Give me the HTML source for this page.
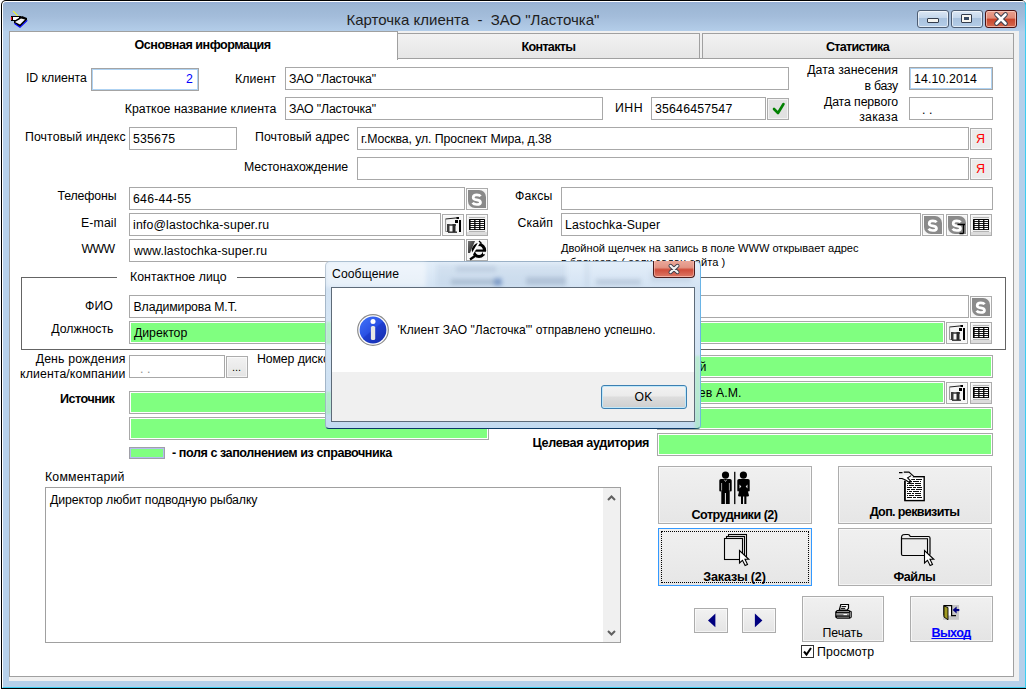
<!DOCTYPE html><html><head><meta charset="utf-8"><style>html,body{margin:0;padding:0;width:1026px;height:690px;overflow:hidden;background:#fff;}div,span,svg{position:absolute;}.t{white-space:pre;font-family:"Liberation Sans",sans-serif;}</style></head><body><div style="left:1px;top:0px;width:1025px;height:689px;background:#000;border-radius:5px 5px 0 0;"></div><div style="left:2px;top:1px;width:1024px;height:687px;background:linear-gradient(#95aed6 0px,#9cb6d4 3px,#a3bcda 14px,#b2cce8 28px,#b6d0ea 30px,#b6d0ea 100%);border-left:1px solid #fff;border-top:1px solid #fff;border-right:1px solid #3ccdf0;border-bottom:1px solid #3ccdf0;box-sizing:border-box;border-radius:4px 4px 0 0;"></div><div style="left:3px;top:31px;width:1016px;height:650px;background:#b6d0ea;"></div><div style="left:9px;top:31px;width:1010px;height:650px;background:#f0f0f0;"></div><div style="left:9px;top:58px;width:1005px;height:619px;background:#fff;border:1px solid #a0a0a0;box-sizing:border-box;"></div><div style="left:397px;top:33px;width:303px;height:26px;background:linear-gradient(#f2f2f2,#e6e6e6);border:1px solid #a0a0a0;box-sizing:border-box;"></div><div style="left:702px;top:33px;width:312px;height:26px;background:linear-gradient(#f2f2f2,#e6e6e6);border:1px solid #a0a0a0;box-sizing:border-box;"></div><div style="left:9px;top:31px;width:389px;height:29px;background:#fff;border:1px solid #a0a0a0;border-bottom:none;box-sizing:border-box;"></div><span class="t" style="left:134.5px;top:38.13px;font-size:12.6px;line-height:15px;font-weight:bold;color:#000;letter-spacing:-0.5px;">Основная информация</span><span class="t" style="left:521.5px;top:40.13px;font-size:12.6px;line-height:15px;font-weight:bold;color:#000;letter-spacing:-0.7px;">Контакты</span><span class="t" style="left:826px;top:40.13px;font-size:12.6px;line-height:15px;font-weight:bold;color:#000;letter-spacing:-0.75px;">Статистика</span><span class="t" style="left:346.5px;top:11.30px;font-size:15px;line-height:18px;font-weight:normal;color:#1e1e1e;letter-spacing:0px;">Карточка клиента&nbsp; -&nbsp; ЗАО "Ласточка"</span><div style="left:917px;top:10px;width:32px;height:18px;border:1px solid #4d5d73;border-radius:3px;box-sizing:border-box;background:linear-gradient(#dbe7f4 0%,#c3d6eb 45%,#a9c2de 46%,#b4cde8 100%);box-shadow:inset 0 0 0 1px rgba(255,255,255,.6);"></div><div style="left:951px;top:10px;width:32px;height:18px;border:1px solid #4d5d73;border-radius:3px;box-sizing:border-box;background:linear-gradient(#dbe7f4 0%,#c3d6eb 45%,#a9c2de 46%,#b4cde8 100%);box-shadow:inset 0 0 0 1px rgba(255,255,255,.6);"></div><div style="left:985px;top:10px;width:32px;height:18px;border:1px solid #4a1010;border-radius:3px;box-sizing:border-box;background:linear-gradient(#eaa08e 0%,#e08a76 45%,#c8442a 50%,#d46a50 100%);box-shadow:inset 0 0 0 1px rgba(255,220,210,.6);"></div><div style="left:927px;top:18px;width:12px;height:5px;background:#f4f4f0;border:1px solid #333c4c;border-radius:1px;box-sizing:border-box;"></div><div style="left:961px;top:14px;width:11px;height:9px;background:#f8f6f0;border:1px solid #333c4c;border-radius:1px;box-sizing:border-box;"></div><div style="left:964px;top:17px;width:5px;height:3px;background:#394a62;"></div><svg style="position:absolute;left:992px;top:11px" width="18" height="16"><path d="M4.5 3.5 L13.5 12.5 M13.5 3.5 L4.5 12.5" stroke="#3a4050" stroke-width="4.6" stroke-linecap="round"/><path d="M4.5 3.5 L13.5 12.5 M13.5 3.5 L4.5 12.5" stroke="#fff" stroke-width="2.6" stroke-linecap="round"/></svg><svg style="left:8px;top:8px" width="24" height="22" shape-rendering="crispEdges"><path d="M5 3 L12 10" stroke="#ffff00" stroke-width="1.05" shape-rendering="auto"/><rect x="3" y="8" width="10" height="5" fill="#000"/><rect x="3" y="9" width="1" height="3" fill="#ff0000"/><rect x="5" y="9" width="6" height="3" fill="#fff"/><path d="M6 13 L14 8 L19 10 L19 12 L12 19 L6 15 Z" fill="#000" shape-rendering="auto"/><path d="M7 14 L13 10.5 L17 11.5 L12 16.5 Z" fill="#f4f4f4" shape-rendering="auto"/><path d="M6.5 15.5 L12 19.3 L19.3 12.3" fill="none" stroke="#0000ff" stroke-width="1.1" shape-rendering="auto"/><path d="M12 10 L10 12" stroke="#000" stroke-width="1" shape-rendering="auto"/></svg><span class="t" style="left:26px;top:71.24px;font-size:12.3px;line-height:15px;font-weight:normal;color:#000;letter-spacing:-0.05px;">ID клиента</span><div style="left:91px;top:68px;width:108px;height:23px;background:#fff;border:1px solid #a4a4a4;box-sizing:border-box;box-shadow:inset 0 0 0 1px #aed2f2;"></div><span class="t" style="right:833px;top:72.24px;font-size:12.3px;line-height:15px;font-weight:normal;color:#0000ff;letter-spacing:0.08px;">2</span><span class="t" style="left:235px;top:72.24px;font-size:12.3px;line-height:15px;font-weight:normal;color:#000;letter-spacing:0.1px;">Клиент</span><div style="left:285px;top:67px;width:504px;height:23px;background:#fff;border:1px solid #a8a8a8;box-sizing:border-box;"></div><span class="t" style="left:289px;top:72.24px;font-size:12.3px;line-height:15px;font-weight:normal;color:#000;letter-spacing:-0.15px;">ЗАО "Ласточка"</span><span class="t" style="right:128px;top:63.44px;font-size:12.3px;line-height:15px;font-weight:normal;color:#000;letter-spacing:0.05px;">Дата занесения</span><span class="t" style="right:128px;top:78.54px;font-size:12.3px;line-height:15px;font-weight:normal;color:#000;letter-spacing:-0.25px;">в базу</span><div style="left:909px;top:67px;width:84px;height:23px;background:#fff;border:1px solid #a4a4a4;box-sizing:border-box;box-shadow:inset 0 0 0 1px #aed2f2;"></div><span class="t" style="left:914px;top:72.24px;font-size:12.3px;line-height:15px;font-weight:normal;color:#000;letter-spacing:0.15px;">14.10.2014</span><span class="t" style="right:749.5px;top:102.24px;font-size:12.3px;line-height:15px;font-weight:normal;color:#000;letter-spacing:0.05px;">Краткое название клиента</span><div style="left:285px;top:97px;width:318px;height:23px;background:#fff;border:1px solid #a8a8a8;box-sizing:border-box;"></div><span class="t" style="left:289px;top:102.24px;font-size:12.3px;line-height:15px;font-weight:normal;color:#000;letter-spacing:-0.15px;">ЗАО "Ласточка"</span><span class="t" style="left:615px;top:101.24px;font-size:12.3px;line-height:15px;font-weight:normal;color:#000;letter-spacing:0.5px;">ИНН</span><div style="left:651px;top:97px;width:115px;height:23px;background:#fff;border:1px solid #a8a8a8;box-sizing:border-box;"></div><span class="t" style="left:655px;top:102.24px;font-size:12.3px;line-height:15px;font-weight:normal;color:#000;letter-spacing:0.2px;">35646457547</span><div style="left:767px;top:98px;width:22px;height:22px;background:linear-gradient(#f0f0f0,#e5e5e5);border:1px solid #acacac;box-sizing:border-box;box-shadow:inset 0 0 0 1px rgba(255,255,255,.6);background:#e1e1e1;"><svg width="22" height="22" style="left:-1px;top:-1px"><path d="M7 11 L11 15 L16.5 6" fill="none" stroke="#008000" stroke-width="2.6" stroke-linecap="round" stroke-linejoin="round"/></svg></div><span class="t" style="right:128px;top:94.64px;font-size:12.3px;line-height:15px;font-weight:normal;color:#000;letter-spacing:-0.1px;">Дата первого</span><span class="t" style="right:128px;top:109.74px;font-size:12.3px;line-height:15px;font-weight:normal;color:#000;letter-spacing:0.25px;">заказа</span><div style="left:909px;top:97px;width:84px;height:23px;background:#fff;border:1px solid #a8a8a8;box-sizing:border-box;"></div><span class="t" style="left:922px;top:103.24px;font-size:12.3px;line-height:15px;font-weight:normal;color:#000;letter-spacing:0.08px;">. .</span><span class="t" style="left:25px;top:129.74px;font-size:12.3px;line-height:15px;font-weight:normal;color:#000;letter-spacing:0.1px;">Почтовый индекс</span><div style="left:129px;top:127px;width:108px;height:23px;background:#fff;border:1px solid #a8a8a8;box-sizing:border-box;"></div><span class="t" style="left:133px;top:132.24px;font-size:12.3px;line-height:15px;font-weight:normal;color:#000;letter-spacing:0.2px;">535675</span><span class="t" style="left:255px;top:129.74px;font-size:12.3px;line-height:15px;font-weight:normal;color:#000;letter-spacing:0.05px;">Почтовый адрес</span><div style="left:357px;top:127px;width:612px;height:23px;background:#fff;border:1px solid #a8a8a8;box-sizing:border-box;"></div><span class="t" style="left:361px;top:132.24px;font-size:12.3px;line-height:15px;font-weight:normal;color:#000;letter-spacing:-0.1px;">г.Москва, ул. Проспект Мира, д.38</span><div style="left:970px;top:128px;width:22px;height:22px;background:linear-gradient(#f0f0f0,#e5e5e5);border:1px solid #acacac;box-sizing:border-box;box-shadow:inset 0 0 0 1px rgba(255,255,255,.6);background:#ececec;"><span class="t" style="left:5px;top:2px;font-size:12.5px;line-height:16px;color:#f00">Я</span></div><span class="t" style="right:678px;top:160.24px;font-size:12.3px;line-height:15px;font-weight:normal;color:#000;letter-spacing:-0.05px;">Местонахождение</span><div style="left:357px;top:157px;width:612px;height:23px;background:#fff;border:1px solid #a8a8a8;box-sizing:border-box;"></div><div style="left:970px;top:158px;width:22px;height:22px;background:linear-gradient(#f0f0f0,#e5e5e5);border:1px solid #acacac;box-sizing:border-box;box-shadow:inset 0 0 0 1px rgba(255,255,255,.6);background:#ececec;"><span class="t" style="left:5px;top:2px;font-size:12.5px;line-height:16px;color:#f00">Я</span></div><span class="t" style="right:909.5px;top:189.24px;font-size:12.3px;line-height:15px;font-weight:normal;color:#000;letter-spacing:-0.1px;">Телефоны</span><div style="left:129px;top:187px;width:336px;height:23px;background:#fff;border:1px solid #a8a8a8;box-sizing:border-box;"></div><span class="t" style="left:133px;top:192.24px;font-size:12.3px;line-height:15px;font-weight:normal;color:#000;letter-spacing:0.25px;">646-44-55</span><span class="t" style="left:515px;top:189.24px;font-size:12.3px;line-height:15px;font-weight:normal;color:#000;letter-spacing:0.15px;">Факсы</span><div style="left:561px;top:187px;width:432px;height:23px;background:#fff;border:1px solid #a8a8a8;box-sizing:border-box;"></div><div style="left:466px;top:188px;width:22px;height:22px;background:linear-gradient(#f0f0f0,#e5e5e5);border:1px solid #acacac;box-sizing:border-box;box-shadow:inset 0 0 0 1px rgba(255,255,255,.6);background:#f4f4f4;"><svg width="22" height="22" style="left:-1px;top:-1px"><path d="M2 2 H13 A7 7 0 0 1 20 9 V20 H9 A7 7 0 0 1 2 13 Z" fill="#8a8a8a"/><path d="M14.6 8.3 Q13.6 6.9 10.8 6.9 Q7.2 6.9 7.2 9.4 Q7.2 11.4 10.8 11.8 Q14.5 12.2 14.5 14.4 Q14.5 16.5 10.8 16.5 Q7.7 16.5 6.6 14.8" fill="none" stroke="#fff" stroke-width="2.7"/></svg></div><span class="t" style="right:909.5px;top:216.24px;font-size:12.3px;line-height:15px;font-weight:normal;color:#000;letter-spacing:0.1px;">E-mail</span><div style="left:129px;top:213px;width:312px;height:23px;background:#fff;border:1px solid #a8a8a8;box-sizing:border-box;"></div><span class="t" style="left:133px;top:218.24px;font-size:12.3px;line-height:15px;font-weight:normal;color:#000;letter-spacing:0.15px;">info@lastochka-super.ru</span><div style="left:442px;top:214px;width:22px;height:22px;background:linear-gradient(#f0f0f0,#e5e5e5);border:1px solid #acacac;box-sizing:border-box;box-shadow:inset 0 0 0 1px rgba(255,255,255,.6);background:#f6f6f6;"><svg width="22" height="22" style="left:-1px;top:-1px"><path d="M3.5 5 L16 3.8" stroke="#222" stroke-width="1.1"/><rect x="14.5" y="3" width="2.5" height="2" fill="#000"/><path d="M3.6 5 V17.5 H15" stroke="#777" stroke-width="0.8" fill="none"/><rect x="13" y="6" width="3" height="3" fill="#000"/><rect x="17" y="6" width="2" height="12" fill="#000"/><rect x="5" y="10" width="9" height="2" fill="#666"/><rect x="5" y="10" width="2.5" height="8" fill="#3a3a3a"/><rect x="10.5" y="10" width="3" height="8" fill="#2a2a2a"/><path d="M6 18.5 H15" stroke="#444" stroke-width="1"/></svg></div><div style="left:466px;top:214px;width:22px;height:22px;background:linear-gradient(#f0f0f0,#e5e5e5);border:1px solid #acacac;box-sizing:border-box;box-shadow:inset 0 0 0 1px rgba(255,255,255,.6);background:#f0f0f0;"><svg width="22" height="22" style="left:-1px;top:-1px"><rect x="3" y="3" width="16" height="1" fill="#b4b4b4"/><rect x="3" y="17" width="16" height="1" fill="#b4b4b4"/><rect x="1" y="18" width="20" height="3" fill="#dcdcdc"/><rect x="3" y="5" width="16" height="11" rx="0.5" fill="#000"/><rect x="4.6" y="6" width="3.6" height="1.1" fill="#fff"/><rect x="9.5" y="6" width="3.6" height="1.1" fill="#fff"/><rect x="14.4" y="6" width="3.6" height="1.1" fill="#fff"/><rect x="4.6" y="8" width="3.6" height="1.1" fill="#fff"/><rect x="9.5" y="8" width="3.6" height="1.1" fill="#fff"/><rect x="14.4" y="8" width="3.6" height="1.1" fill="#fff"/><rect x="4.6" y="10" width="3.6" height="1.1" fill="#fff"/><rect x="9.5" y="10" width="3.6" height="1.1" fill="#fff"/><rect x="14.4" y="10" width="3.6" height="1.1" fill="#fff"/><rect x="4.6" y="12" width="3.6" height="1.1" fill="#fff"/><rect x="9.5" y="12" width="3.6" height="1.1" fill="#fff"/><rect x="14.4" y="12" width="3.6" height="1.1" fill="#fff"/><rect x="4.6" y="14" width="3.6" height="1.1" fill="#fff"/><rect x="9.5" y="14" width="3.6" height="1.1" fill="#fff"/><rect x="14.4" y="14" width="3.6" height="1.1" fill="#fff"/></svg></div><span class="t" style="left:517.5px;top:216.24px;font-size:12.3px;line-height:15px;font-weight:normal;color:#000;letter-spacing:0.1px;">Скайп</span><div style="left:561px;top:213px;width:360px;height:23px;background:#fff;border:1px solid #a8a8a8;box-sizing:border-box;"></div><span class="t" style="left:565px;top:218.24px;font-size:12.3px;line-height:15px;font-weight:normal;color:#000;letter-spacing:0.15px;">Lastochka-Super</span><div style="left:922px;top:214px;width:22px;height:22px;background:linear-gradient(#f0f0f0,#e5e5e5);border:1px solid #acacac;box-sizing:border-box;box-shadow:inset 0 0 0 1px rgba(255,255,255,.6);background:#f4f4f4;"><svg width="22" height="22" style="left:-1px;top:-1px"><path d="M2 2 H13 A7 7 0 0 1 20 9 V20 H9 A7 7 0 0 1 2 13 Z" fill="#8a8a8a"/><path d="M14.6 8.3 Q13.6 6.9 10.8 6.9 Q7.2 6.9 7.2 9.4 Q7.2 11.4 10.8 11.8 Q14.5 12.2 14.5 14.4 Q14.5 16.5 10.8 16.5 Q7.7 16.5 6.6 14.8" fill="none" stroke="#fff" stroke-width="2.7"/></svg></div><div style="left:946px;top:214px;width:22px;height:22px;background:linear-gradient(#f0f0f0,#e5e5e5);border:1px solid #acacac;box-sizing:border-box;box-shadow:inset 0 0 0 1px rgba(255,255,255,.6);background:#f4f4f4;"><svg width="22" height="22" style="left:-1px;top:-1px"><path d="M2 2 H13 A7 7 0 0 1 20 9 V20 H9 A7 7 0 0 1 2 13 Z" fill="#8a8a8a"/><path d="M14.6 8.3 Q13.6 6.9 10.8 6.9 Q7.2 6.9 7.2 9.4 Q7.2 11.4 10.8 11.8 Q14.5 12.2 14.5 14.4 Q14.5 16.5 10.8 16.5 Q7.7 16.5 6.6 14.8" fill="none" stroke="#fff" stroke-width="2.7"/><path d="M11.5 10.5 H19 M17.5 10.5 V19.5 M13.5 19.5 H17.5" stroke="#000" stroke-width="1.3" fill="none"/></svg></div><div style="left:970px;top:214px;width:22px;height:22px;background:linear-gradient(#f0f0f0,#e5e5e5);border:1px solid #acacac;box-sizing:border-box;box-shadow:inset 0 0 0 1px rgba(255,255,255,.6);background:#f0f0f0;"><svg width="22" height="22" style="left:-1px;top:-1px"><rect x="3" y="3" width="16" height="1" fill="#b4b4b4"/><rect x="3" y="17" width="16" height="1" fill="#b4b4b4"/><rect x="1" y="18" width="20" height="3" fill="#dcdcdc"/><rect x="3" y="5" width="16" height="11" rx="0.5" fill="#000"/><rect x="4.6" y="6" width="3.6" height="1.1" fill="#fff"/><rect x="9.5" y="6" width="3.6" height="1.1" fill="#fff"/><rect x="14.4" y="6" width="3.6" height="1.1" fill="#fff"/><rect x="4.6" y="8" width="3.6" height="1.1" fill="#fff"/><rect x="9.5" y="8" width="3.6" height="1.1" fill="#fff"/><rect x="14.4" y="8" width="3.6" height="1.1" fill="#fff"/><rect x="4.6" y="10" width="3.6" height="1.1" fill="#fff"/><rect x="9.5" y="10" width="3.6" height="1.1" fill="#fff"/><rect x="14.4" y="10" width="3.6" height="1.1" fill="#fff"/><rect x="4.6" y="12" width="3.6" height="1.1" fill="#fff"/><rect x="9.5" y="12" width="3.6" height="1.1" fill="#fff"/><rect x="14.4" y="12" width="3.6" height="1.1" fill="#fff"/><rect x="4.6" y="14" width="3.6" height="1.1" fill="#fff"/><rect x="9.5" y="14" width="3.6" height="1.1" fill="#fff"/><rect x="14.4" y="14" width="3.6" height="1.1" fill="#fff"/></svg></div><span class="t" style="right:911.5px;top:242.04px;font-size:12.3px;line-height:15px;font-weight:normal;color:#000;letter-spacing:-0.6px;">WWW</span><div style="left:129px;top:239px;width:336px;height:23px;background:#fff;border:1px solid #a8a8a8;box-sizing:border-box;"></div><span class="t" style="left:134px;top:244.24px;font-size:12.3px;line-height:15px;font-weight:normal;color:#000;letter-spacing:0.15px;">www.lastochka-super.ru</span><div style="left:466px;top:239px;width:22px;height:22px;background:linear-gradient(#f0f0f0,#e5e5e5);border:1px solid #acacac;box-sizing:border-box;box-shadow:inset 0 0 0 1px rgba(255,255,255,.6);background:#f4f4f4;"><svg width="22" height="22" style="left:-1px;top:-1px"><defs><linearGradient id="ieg" x1="0" y1="0" x2="1" y2="1"><stop offset="0" stop-color="#777"/><stop offset="1" stop-color="#111"/></linearGradient></defs><path d="M2 2 H9 L4 14 H2 Z" fill="url(#ieg)"/><ellipse cx="13" cy="11.5" rx="5.6" ry="6" fill="none" stroke="#000" stroke-width="3.2"/><rect x="8" y="10.5" width="10" height="2.2" fill="#000"/><path d="M17 14 H20" stroke="#f4f4f4" stroke-width="2.5"/><path d="M3.5 19.5 L13.5 3" stroke="#fff" stroke-width="1.8"/><path d="M4 20.5 L9 17" stroke="#000" stroke-width="2.2"/><path d="M13 2 L15.5 4.5" stroke="#000" stroke-width="1.2"/></svg></div><span class="t" style="left:561px;top:242.15px;font-size:11.1px;line-height:13px;font-weight:normal;color:#000;letter-spacing:-0.03px;">Двойной щелчек на запись в поле WWW открывает адрес</span><span class="t" style="left:561px;top:256.45px;font-size:11.1px;line-height:13px;font-weight:normal;color:#000;letter-spacing:0.05px;">в браузере ( если задан сайта )</span><div style="left:21px;top:277px;width:985px;height:73px;border:1px solid #646464;box-sizing:border-box;"></div><div style="left:117px;top:270px;width:120px;height:15px;background:#fff;"></div><span class="t" style="left:130px;top:270.24px;font-size:12.3px;line-height:15px;font-weight:normal;color:#000;letter-spacing:0.05px;">Контактное лицо</span><span class="t" style="right:913px;top:299.24px;font-size:12.3px;line-height:15px;font-weight:normal;color:#000;letter-spacing:0.08px;">ФИО</span><div style="left:129px;top:295px;width:840px;height:23px;background:#fff;border:1px solid #a8a8a8;box-sizing:border-box;"></div><span class="t" style="left:133.5px;top:300.24px;font-size:12.3px;line-height:15px;font-weight:normal;color:#000;letter-spacing:-0.1px;">Владимирова М.Т.</span><div style="left:970px;top:296px;width:22px;height:22px;background:linear-gradient(#f0f0f0,#e5e5e5);border:1px solid #acacac;box-sizing:border-box;box-shadow:inset 0 0 0 1px rgba(255,255,255,.6);background:#f4f4f4;"><svg width="22" height="22" style="left:-1px;top:-1px"><path d="M2 2 H13 A7 7 0 0 1 20 9 V20 H9 A7 7 0 0 1 2 13 Z" fill="#8a8a8a"/><path d="M14.6 8.3 Q13.6 6.9 10.8 6.9 Q7.2 6.9 7.2 9.4 Q7.2 11.4 10.8 11.8 Q14.5 12.2 14.5 14.4 Q14.5 16.5 10.8 16.5 Q7.7 16.5 6.6 14.8" fill="none" stroke="#fff" stroke-width="2.7"/></svg></div><span class="t" style="right:912.5px;top:322.24px;font-size:12.3px;line-height:15px;font-weight:normal;color:#000;letter-spacing:0.0px;">Должность</span><div style="left:129px;top:321px;width:816px;height:23px;background:#80ff80;border:1px solid #a8a8a8;box-sizing:border-box;box-shadow:inset 0 0 0 1px #fff;"></div><span class="t" style="left:134px;top:326.24px;font-size:12.3px;line-height:15px;font-weight:normal;color:#000;letter-spacing:-0.05px;">Директор</span><div style="left:946px;top:322px;width:22px;height:22px;background:linear-gradient(#f0f0f0,#e5e5e5);border:1px solid #acacac;box-sizing:border-box;box-shadow:inset 0 0 0 1px rgba(255,255,255,.6);background:#f6f6f6;"><svg width="22" height="22" style="left:-1px;top:-1px"><path d="M3.5 5 L16 3.8" stroke="#222" stroke-width="1.1"/><rect x="14.5" y="3" width="2.5" height="2" fill="#000"/><path d="M3.6 5 V17.5 H15" stroke="#777" stroke-width="0.8" fill="none"/><rect x="13" y="6" width="3" height="3" fill="#000"/><rect x="17" y="6" width="2" height="12" fill="#000"/><rect x="5" y="10" width="9" height="2" fill="#666"/><rect x="5" y="10" width="2.5" height="8" fill="#3a3a3a"/><rect x="10.5" y="10" width="3" height="8" fill="#2a2a2a"/><path d="M6 18.5 H15" stroke="#444" stroke-width="1"/></svg></div><div style="left:970px;top:322px;width:22px;height:22px;background:linear-gradient(#f0f0f0,#e5e5e5);border:1px solid #acacac;box-sizing:border-box;box-shadow:inset 0 0 0 1px rgba(255,255,255,.6);background:#f0f0f0;"><svg width="22" height="22" style="left:-1px;top:-1px"><rect x="3" y="3" width="16" height="1" fill="#b4b4b4"/><rect x="3" y="17" width="16" height="1" fill="#b4b4b4"/><rect x="1" y="18" width="20" height="3" fill="#dcdcdc"/><rect x="3" y="5" width="16" height="11" rx="0.5" fill="#000"/><rect x="4.6" y="6" width="3.6" height="1.1" fill="#fff"/><rect x="9.5" y="6" width="3.6" height="1.1" fill="#fff"/><rect x="14.4" y="6" width="3.6" height="1.1" fill="#fff"/><rect x="4.6" y="8" width="3.6" height="1.1" fill="#fff"/><rect x="9.5" y="8" width="3.6" height="1.1" fill="#fff"/><rect x="14.4" y="8" width="3.6" height="1.1" fill="#fff"/><rect x="4.6" y="10" width="3.6" height="1.1" fill="#fff"/><rect x="9.5" y="10" width="3.6" height="1.1" fill="#fff"/><rect x="14.4" y="10" width="3.6" height="1.1" fill="#fff"/><rect x="4.6" y="12" width="3.6" height="1.1" fill="#fff"/><rect x="9.5" y="12" width="3.6" height="1.1" fill="#fff"/><rect x="14.4" y="12" width="3.6" height="1.1" fill="#fff"/><rect x="4.6" y="14" width="3.6" height="1.1" fill="#fff"/><rect x="9.5" y="14" width="3.6" height="1.1" fill="#fff"/><rect x="14.4" y="14" width="3.6" height="1.1" fill="#fff"/></svg></div><span class="t" style="right:900.5px;top:351.54px;font-size:12.3px;line-height:15px;font-weight:normal;color:#000;letter-spacing:0.15px;">День рождения</span><span class="t" style="right:900.5px;top:366.74px;font-size:12.3px;line-height:15px;font-weight:normal;color:#000;letter-spacing:0.1px;">клиента/компании</span><div style="left:129px;top:355px;width:96px;height:23px;background:#fff;border:1px solid #a8a8a8;box-sizing:border-box;"></div><span class="t" style="left:140px;top:362.24px;font-size:12.3px;line-height:15px;font-weight:normal;color:#909090;letter-spacing:0.08px;">. .</span><div style="left:226px;top:356px;width:22px;height:22px;background:linear-gradient(#f0f0f0,#e5e5e5);border:1px solid #acacac;box-sizing:border-box;box-shadow:inset 0 0 0 1px rgba(255,255,255,.6);background:linear-gradient(#f2f2f2,#e4e4e4);"><span class="t" style="left:5px;top:3px;font-size:11px;line-height:14px">...</span></div><span class="t" style="left:257px;top:352.04px;font-size:12.3px;line-height:15px;font-weight:normal;color:#000;letter-spacing:-0.1px;">Номер дисконтной карты</span><div style="left:657px;top:355px;width:336px;height:23px;background:#80ff80;border:1px solid #a8a8a8;box-sizing:border-box;box-shadow:inset 0 0 0 1px #fff;"></div><span class="t" style="right:319.5px;top:360.24px;font-size:12.3px;line-height:15px;font-weight:normal;color:#000;letter-spacing:0.08px;">Основной</span><span class="t" style="left:60px;top:391.63px;font-size:12.6px;line-height:15px;font-weight:bold;color:#000;letter-spacing:-0.5px;">Источник</span><div style="left:129px;top:391px;width:360px;height:23px;background:#80ff80;border:1px solid #a8a8a8;box-sizing:border-box;box-shadow:inset 0 0 0 1px #fff;"></div><div style="left:657px;top:381px;width:288px;height:23px;background:#80ff80;border:1px solid #a8a8a8;box-sizing:border-box;box-shadow:inset 0 0 0 1px #fff;"></div><span class="t" style="right:284.5px;top:385.74px;font-size:12.3px;line-height:15px;font-weight:normal;color:#000;letter-spacing:0.08px;">Соловьев А.М.</span><div style="left:946px;top:382px;width:22px;height:22px;background:linear-gradient(#f0f0f0,#e5e5e5);border:1px solid #acacac;box-sizing:border-box;box-shadow:inset 0 0 0 1px rgba(255,255,255,.6);background:#f6f6f6;"><svg width="22" height="22" style="left:-1px;top:-1px"><path d="M3.5 5 L16 3.8" stroke="#222" stroke-width="1.1"/><rect x="14.5" y="3" width="2.5" height="2" fill="#000"/><path d="M3.6 5 V17.5 H15" stroke="#777" stroke-width="0.8" fill="none"/><rect x="13" y="6" width="3" height="3" fill="#000"/><rect x="17" y="6" width="2" height="12" fill="#000"/><rect x="5" y="10" width="9" height="2" fill="#666"/><rect x="5" y="10" width="2.5" height="8" fill="#3a3a3a"/><rect x="10.5" y="10" width="3" height="8" fill="#2a2a2a"/><path d="M6 18.5 H15" stroke="#444" stroke-width="1"/></svg></div><div style="left:970px;top:382px;width:22px;height:22px;background:linear-gradient(#f0f0f0,#e5e5e5);border:1px solid #acacac;box-sizing:border-box;box-shadow:inset 0 0 0 1px rgba(255,255,255,.6);background:#f0f0f0;"><svg width="22" height="22" style="left:-1px;top:-1px"><rect x="3" y="3" width="16" height="1" fill="#b4b4b4"/><rect x="3" y="17" width="16" height="1" fill="#b4b4b4"/><rect x="1" y="18" width="20" height="3" fill="#dcdcdc"/><rect x="3" y="5" width="16" height="11" rx="0.5" fill="#000"/><rect x="4.6" y="6" width="3.6" height="1.1" fill="#fff"/><rect x="9.5" y="6" width="3.6" height="1.1" fill="#fff"/><rect x="14.4" y="6" width="3.6" height="1.1" fill="#fff"/><rect x="4.6" y="8" width="3.6" height="1.1" fill="#fff"/><rect x="9.5" y="8" width="3.6" height="1.1" fill="#fff"/><rect x="14.4" y="8" width="3.6" height="1.1" fill="#fff"/><rect x="4.6" y="10" width="3.6" height="1.1" fill="#fff"/><rect x="9.5" y="10" width="3.6" height="1.1" fill="#fff"/><rect x="14.4" y="10" width="3.6" height="1.1" fill="#fff"/><rect x="4.6" y="12" width="3.6" height="1.1" fill="#fff"/><rect x="9.5" y="12" width="3.6" height="1.1" fill="#fff"/><rect x="14.4" y="12" width="3.6" height="1.1" fill="#fff"/><rect x="4.6" y="14" width="3.6" height="1.1" fill="#fff"/><rect x="9.5" y="14" width="3.6" height="1.1" fill="#fff"/><rect x="14.4" y="14" width="3.6" height="1.1" fill="#fff"/></svg></div><div style="left:129px;top:417px;width:360px;height:23px;background:#80ff80;border:1px solid #a8a8a8;box-sizing:border-box;box-shadow:inset 0 0 0 1px #fff;"></div><div style="left:657px;top:407px;width:336px;height:23px;background:#80ff80;border:1px solid #a8a8a8;box-sizing:border-box;box-shadow:inset 0 0 0 1px #fff;"></div><div style="left:129px;top:447px;width:36px;height:12px;background:#80ff80;border:1px solid #a0a0a8;box-sizing:border-box;box-shadow:inset 0 0 0 1px #b4bcf0;"></div><span class="t" style="left:172px;top:446.13px;font-size:12.6px;line-height:15px;font-weight:bold;color:#000;letter-spacing:-0.45px;">- поля с заполнением из справочника</span><span class="t" style="left:532.5px;top:435.63px;font-size:12.6px;line-height:15px;font-weight:bold;color:#000;letter-spacing:-0.35px;">Целевая аудитория</span><div style="left:657px;top:433px;width:336px;height:23px;background:#80ff80;border:1px solid #a8a8a8;box-sizing:border-box;box-shadow:inset 0 0 0 1px #fff;"></div><span class="t" style="left:45px;top:470.24px;font-size:12.3px;line-height:15px;font-weight:normal;color:#000;letter-spacing:0.2px;">Комментарий</span><div style="left:45px;top:487px;width:576px;height:156px;background:#fff;border:1px solid #a0a0a0;box-sizing:border-box;"></div><span class="t" style="left:50px;top:492.94px;font-size:12.3px;line-height:15px;font-weight:normal;color:#000;letter-spacing:-0.1px;">Директор любит подводную рыбалку</span><div style="left:603px;top:488px;width:17px;height:154px;background:#f0f0f0;"></div><svg style="left:603px;top:488px" width="17" height="154"><path d="M5 12 L8.5 8.5 L12 12" fill="none" stroke="#606060" stroke-width="2"/><path d="M5 143 L8.5 146.5 L12 143" fill="none" stroke="#606060" stroke-width="2"/></svg><div style="left:658px;top:466px;width:154px;height:58px;background:linear-gradient(#f0f0f0,#e6e6e6);border:1px solid #adadad;box-sizing:border-box;box-shadow:inset 0 0 0 1px rgba(255,255,255,.6);"><svg style="left:60px;top:4px" width="34" height="36"><circle cx="6.5" cy="4.1" r="3.6" fill="#000"/><path d="M0.3 9.5 Q0.3 8 2 8 H11 Q12.7 8 12.7 9.5 V19.5 Q12.7 20.5 11.7 20.5 Q10.7 20.5 10.7 19.5 V33 H6.9 V22 H5.9 V33 H2.3 V19.5 Q2.3 20.5 1.3 20.5 Q0.3 20.5 0.3 19.5 Z" fill="#000"/><path d="M2.6 12 V19.5 M10.4 12 V19.5" stroke="#e4e4e4" stroke-width="0.7"/><path d="M5.2 8.6 L6.5 10.5 L7.8 8.6" stroke="#e4e4e4" stroke-width="0.7" fill="none"/><rect x="15.1" y="0.8" width="1.3" height="32.3" fill="#000"/><circle cx="24.4" cy="4.1" r="3.6" fill="#000"/><path d="M18.3 9.5 Q18.3 8 20 8 H29 Q30.7 8 30.7 9.5 V19.5 Q30.7 20.5 29.7 20.5 Q28.7 20.5 28.7 19.5 L30 24.5 Q30 25.5 28.5 25.5 H27.4 V33 H25.3 V25.5 H24 V33 H22 V25.5 H20.5 Q19 25.5 19 24.5 L20.3 19.5 Q20.3 20.5 19.3 20.5 Q18.3 20.5 18.3 19.5 Z" fill="#000"/><path d="M20.5 13.5 L22.3 15.5 L20.5 17.5 Z M28.5 13.5 L26.7 15.5 L28.5 17.5 Z" fill="#e4e4e4"/></svg></div><span class="t" style="left:434.5px;width:600px;text-align:center;top:508.13px;font-size:12.6px;line-height:15px;font-weight:bold;color:#000;letter-spacing:-0.5px;">Сотрудники (2)</span><div style="left:658px;top:528px;width:154px;height:58px;background:linear-gradient(#f0f0f0,#e6e6e6);border:1px solid #3399ff;box-sizing:border-box;"><svg style="left:60px;top:1px" width="36" height="40"><rect x="9.5" y="4.5" width="18" height="22" fill="#ececec" stroke="#000" stroke-width="1.1"/><rect x="7.5" y="6.5" width="18" height="22" fill="#ececec" stroke="#000" stroke-width="1.1"/><rect x="5.5" y="8.5" width="18" height="21" fill="#ececec" stroke="#000" stroke-width="1.1"/><path d="M20.5 20.5 V33.0 L23.5 30.3 L26.1 35.5 L28.5 34.5 L26.0 29.3 H29.8 Z" fill="#fff" stroke="#000" stroke-width="1.1" stroke-linejoin="miter"/></svg><div style="left:2px;top:2px;right:2px;bottom:2px;border:1px dotted #000;"></div></div><span class="t" style="left:434.5px;width:600px;text-align:center;top:570.13px;font-size:12.6px;line-height:15px;font-weight:bold;color:#000;letter-spacing:-0.2px;">Заказы (2)</span><div style="left:838px;top:466px;width:154px;height:58px;background:linear-gradient(#f0f0f0,#e6e6e6);border:1px solid #adadad;box-sizing:border-box;box-shadow:inset 0 0 0 1px rgba(255,255,255,.6);"><svg style="left:59px;top:4px" width="36" height="36"><rect x="6.9" y="5.7" width="19.3" height="23.9" fill="#fff" stroke="#000" stroke-width="1.4"/><path d="M9 8.5 H24" stroke="#000" stroke-width="0.95" stroke-dasharray="3 1 4 1 6"/><path d="M9 10.5 H24" stroke="#000" stroke-width="0.95" stroke-dasharray="1 1 3 1 6"/><path d="M9 12.5 H24" stroke="#000" stroke-width="0.95" stroke-dasharray="4 1 2 1 6"/><path d="M9 14.5 H24" stroke="#000" stroke-width="0.95" stroke-dasharray="1 1 5 1 6"/><path d="M9 16.5 H24" stroke="#000" stroke-width="0.95" stroke-dasharray="5 1 3 1 6"/><path d="M9 18.5 H24" stroke="#000" stroke-width="0.95" stroke-dasharray="3 1 4 1 6"/><path d="M9 20.5 H24" stroke="#000" stroke-width="0.95" stroke-dasharray="1 1 3 1 6"/><path d="M9 22.5 H24" stroke="#000" stroke-width="0.95" stroke-dasharray="4 1 2 1 6"/><path d="M9 24.5 H24" stroke="#000" stroke-width="0.95" stroke-dasharray="1 1 5 1 6"/><path d="M9 26.5 H24" stroke="#000" stroke-width="0.95" stroke-dasharray="5 1 3 1 6"/><path d="M5.5 4.4 H15.5 L14 8 L9.5 10 H5.5 Z" fill="#fff"/><path d="M1 1.6 H4.5 M5.8 1.1 H11 L16 5.6" fill="none" stroke="#000" stroke-width="1.1"/><path d="M1 7.5 H4 L7.5 9 L13.8 13" fill="none" stroke="#000" stroke-width="1.1"/><path d="M13.2 4.6 L9.6 6.9 L13.6 11.2" fill="none" stroke="#000" stroke-width="1.1"/><path d="M6.9 9.5 V29.6" stroke="#000" stroke-width="1.4"/></svg></div><span class="t" style="left:614.5px;width:600px;text-align:center;top:505.13px;font-size:12.6px;line-height:15px;font-weight:bold;color:#000;letter-spacing:-0.65px;">Доп. реквизиты</span><div style="left:838px;top:528px;width:154px;height:58px;background:linear-gradient(#f0f0f0,#e6e6e6);border:1px solid #adadad;box-sizing:border-box;box-shadow:inset 0 0 0 1px rgba(255,255,255,.6);"><svg style="left:61px;top:1px" width="36" height="40"><path d="M1.5 7.5 Q1.5 5.5 3 4.8 Q3.8 4.5 5.5 4.5 H8 Q9.5 4.5 10.3 6.5 H28.5 Q30 6.5 30 8 V24 Q30 25.5 28.5 25.5 H2.8 Q1.5 25.5 1.5 24 Z" fill="#ececec" stroke="#000" stroke-width="1.2"/><path d="M2 8.7 H9.8 M9.5 8.7 H27.5 V24" fill="none" stroke="#000" stroke-width="1.1"/><path d="M24.5 20.5 V33.0 L27.5 30.3 L30.1 35.5 L32.5 34.5 L30.0 29.3 H33.8 Z" fill="#fff" stroke="#000" stroke-width="1.1" stroke-linejoin="miter"/></svg></div><span class="t" style="left:614.5px;width:600px;text-align:center;top:570.13px;font-size:12.6px;line-height:15px;font-weight:bold;color:#000;letter-spacing:-0.5px;">Файлы</span><div style="left:694px;top:608px;width:34px;height:25px;background:linear-gradient(#f0f0f0,#e5e5e5);border:1px solid #acacac;box-sizing:border-box;box-shadow:inset 0 0 0 1px rgba(255,255,255,.6);background:linear-gradient(#f2f2f2,#e4e4e4);"><svg width="34" height="25" style="left:-1px;top:-1px"><path d="M21.4 5.6 L14 12.4 L21.4 19.2 Z" fill="#000080"/></svg></div><div style="left:742px;top:608px;width:34px;height:25px;background:linear-gradient(#f0f0f0,#e5e5e5);border:1px solid #acacac;box-sizing:border-box;box-shadow:inset 0 0 0 1px rgba(255,255,255,.6);background:linear-gradient(#f2f2f2,#e4e4e4);"><svg width="34" height="25" style="left:-1px;top:-1px"><path d="M12.9 5.6 L20.4 12.4 L12.9 19.2 Z" fill="#000080"/></svg></div><div style="left:802px;top:596px;width:82px;height:46px;background:linear-gradient(#f0f0f0,#e5e5e5);border:1px solid #acacac;box-sizing:border-box;box-shadow:inset 0 0 0 1px rgba(255,255,255,.6);background:linear-gradient(#f0f0f0,#e4e4e4);"><svg style="left:31px;top:6px" width="20" height="18"><path d="M6.8 1.5 H14.5 V5.2 L13.2 7 H5.3 Z" fill="#fff" stroke="#000" stroke-width="1.2"/><path d="M7.5 3.6 H12.2 M6.8 5.4 H11.2" stroke="#000" stroke-width="1"/><path d="M3 7 H15 L17.8 8.6 V14.2 L16 15.8 H3 L1.2 14.2 V8.8 Z" fill="#000"/><rect x="3" y="8.2" width="12" height="0.9" fill="#b0b0b0"/><rect x="2.3" y="10" width="13" height="2.5" fill="#8c8c8c"/><rect x="9.5" y="11" width="3.5" height="1.1" fill="#fff"/><rect x="3" y="13.7" width="12" height="0.9" fill="#a0a0a0"/><rect x="15.8" y="8.8" width="1.3" height="5.5" fill="#888"/></svg></div><span class="t" style="left:542.5px;width:600px;text-align:center;top:625.94px;font-size:12.3px;line-height:15px;font-weight:normal;color:#000;letter-spacing:-0.05px;">Печать</span><div style="left:910px;top:596px;width:83px;height:46px;background:linear-gradient(#f0f0f0,#e5e5e5);border:1px solid #acacac;box-sizing:border-box;box-shadow:inset 0 0 0 1px rgba(255,255,255,.6);background:linear-gradient(#f0f0f0,#e4e4e4);"><svg style="left:31px;top:7px" width="19" height="17"><rect x="1" y="1" width="16" height="14.8" fill="#c6c6c6"/><rect x="2" y="1.5" width="7.5" height="10" fill="#fff"/><path d="M2 11.5 V1.6 H9.6 V11.6 H14" fill="none" stroke="#000" stroke-width="1.2"/><path d="M2 2 L6 3.5 V15.8 L2 13 Z" fill="#a09a22" stroke="#000" stroke-width="0.9"/><path d="M10.6 6 L14.6 2.6 V9.4 Z" fill="#000080"/><rect x="14" y="5" width="3.3" height="2.1" fill="#000080"/></svg></div><span class="t" style="left:651px;width:600px;text-align:center;top:625.93px;font-size:12.6px;line-height:15px;font-weight:bold;color:#0000ff;letter-spacing:-0.6px;text-decoration:underline;text-decoration-skip-ink:none;">Выход</span><div style="left:801px;top:645px;width:13px;height:13px;background:#fff;border:1px solid #333;box-sizing:border-box;"><svg width="11" height="11"><path d="M2 5.5 L4.5 8.5 L9 2" fill="none" stroke="#000" stroke-width="2"/></svg></div><span class="t" style="left:817px;top:645.04px;font-size:12.3px;line-height:15px;font-weight:normal;color:#000;letter-spacing:0.15px;">Просмотр</span><div style="left:325px;top:261px;width:376px;height:168px;border-radius:5px 5px 4px 4px;background:linear-gradient(180deg,#e3eef9 0px,#dbe8f6 14px,#d3e3f3 26px,#d6e6f5 60px,#cde0f2 140px,#c2daf0 100%);border:1px solid rgba(110,130,150,.45);border-right-color:#6ab4e6;border-bottom-color:#0c3866;box-sizing:border-box;"></div><div style="left:326px;top:262px;width:368px;height:25px;overflow:hidden;filter:blur(2.2px);"><div style="left:0px;top:0px;width:100px;height:25px;background:rgba(255,255,255,.45)"></div><div style="left:110px;top:2px;width:130px;height:23px;background:rgba(150,175,205,.18)"></div><div style="left:125px;top:17px;width:50px;height:6px;background:rgba(110,130,160,.30)"></div><div style="left:130px;top:4px;width:40px;height:6px;background:rgba(120,140,170,.2)"></div><div style="left:200px;top:15px;width:40px;height:8px;background:rgba(110,130,160,.28)"></div><div style="left:168px;top:16px;width:8px;height:8px;background:rgba(40,90,170,.35)"></div><div style="left:270px;top:17px;width:45px;height:6px;background:rgba(110,130,160,.25)"></div><div style="left:260px;top:0px;width:2px;height:25px;background:rgba(110,130,160,.2)"></div><div style="left:325px;top:8px;width:40px;height:12px;background:rgba(140,160,185,.22)"></div></div><div style="left:326px;top:322px;width:5px;height:22px;background:rgba(128,255,128,.35);filter:blur(1px);"></div><div style="left:326px;top:392px;width:5px;height:22px;background:rgba(128,255,128,.35);filter:blur(1px);"></div><div style="left:695px;top:356px;width:5px;height:73px;background:rgba(128,255,128,.3);filter:blur(1px);"></div><div style="left:331px;top:287px;width:364px;height:135px;background:#f0f0f0;border:1px solid #5d6a78;box-sizing:border-box;"></div><div style="left:332px;top:288px;width:362px;height:84px;background:#fff;"></div><span class="t" style="left:332px;top:266.87px;font-size:12.2px;line-height:15px;font-weight:normal;color:#000;letter-spacing:0.08px;">Сообщение</span><div style="left:653px;top:261px;width:42px;height:17px;border:1px solid #4a1c1c;border-top:none;border-radius:0 0 4px 4px;box-sizing:border-box;background:linear-gradient(#eba79a 0%,#e29484 40%,#cf4c3a 55%,#dc7866 100%);box-shadow:inset 0 -1px 0 rgba(255,200,190,.7),inset 1px 0 0 rgba(255,200,190,.5),inset -1px 0 0 rgba(255,200,190,.5);"></div><svg style="left:666px;top:262px" width="16" height="14"><path d="M4.5 3.8 L11.5 10.2 M11.5 3.8 L4.5 10.2" stroke="#40404c" stroke-width="4" stroke-linecap="round"/><path d="M4.5 3.8 L11.5 10.2 M11.5 3.8 L4.5 10.2" stroke="#f4f4f4" stroke-width="2.2" stroke-linecap="round"/></svg><svg style="left:356px;top:313px" width="34" height="34"><defs><linearGradient id="ig" x1="0.15" y1="0.1" x2="0.85" y2="0.95"><stop offset="0" stop-color="#3c6cf4"/><stop offset="0.45" stop-color="#2a50e4"/><stop offset="0.5" stop-color="#1e3ed0"/><stop offset="1" stop-color="#1830b0"/></linearGradient></defs><circle cx="17" cy="17" r="15.3" fill="#fff" stroke="#8c8c8c" stroke-width="1.2"/><circle cx="17" cy="17" r="13.4" fill="url(#ig)"/><circle cx="17" cy="8.6" r="2.5" fill="#fff"/><rect x="14.9" y="13" width="4.3" height="14" rx="1.6" fill="#e8e8e4"/></svg><span class="t" style="left:397.5px;top:323.12px;font-size:12.05px;line-height:14px;font-weight:normal;color:#000;letter-spacing:0px;">'Клиент ЗАО "Ласточка"' отправлено успешно.</span><div style="left:601px;top:385px;width:86px;height:24px;border:1px solid #3c7fb1;border-radius:3px;box-sizing:border-box;background:linear-gradient(#f2f2f2 0%,#ebebeb 45%,#dddddd 50%,#cfcfcf 100%);box-shadow:inset 0 0 0 1px #c0e8fa;"></div><span class="t" style="left:343.5px;width:600px;text-align:center;top:389.87px;font-size:12.2px;line-height:15px;font-weight:normal;color:#000;letter-spacing:0.08px;">OK</span></body></html>
